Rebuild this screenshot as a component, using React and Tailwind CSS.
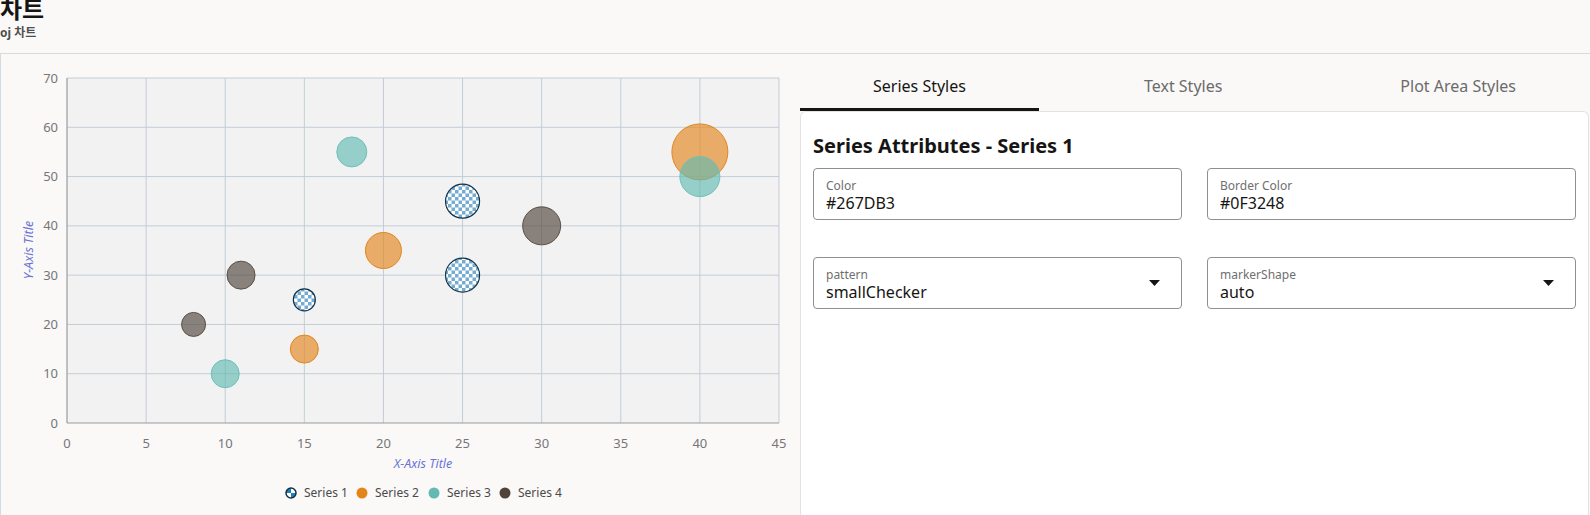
import React from "react";

const X0 = 67;
const X1 = 779;
const Y0 = 422;
const Y1 = 77;

const sx = (v) => X0 + (v * (X1 - X0)) / 45;
const sy = (v) => Y0 - (v * (Y0 - Y1)) / 70;

const series = [
  { name: "Series 1", color: "#267DB3", border: "#0F3248", pattern: true },
  { name: "Series 2", color: "#e3851a", border: "#e0861c" },
  { name: "Series 3", color: "#62bab3", border: "#6cc0b9" },
  { name: "Series 4", color: "#4f433a", border: "#5a4e46" },
];

// x, y, radius (px) per bubble
const bubbles = [
  { s: 0, x: 15, y: 25, r: 11 },
  { s: 0, x: 25, y: 45, r: 17 },
  { s: 0, x: 25, y: 30, r: 17 },
  { s: 1, x: 15, y: 15, r: 14 },
  { s: 1, x: 20, y: 35, r: 18 },
  { s: 1, x: 40, y: 55, r: 28 },
  { s: 2, x: 10, y: 10, r: 14 },
  { s: 2, x: 18, y: 55, r: 15 },
  { s: 2, x: 40, y: 50, r: 20 },
  { s: 3, x: 8, y: 20, r: 12 },
  { s: 3, x: 11, y: 30, r: 14 },
  { s: 3, x: 30, y: 40, r: 19 },
];

const legendX = [291, 362, 434, 505];

function BubbleChart() {
  const xTicks = [0, 5, 10, 15, 20, 25, 30, 35, 40, 45];
  const yTicks = [0, 10, 20, 30, 40, 50, 60, 70];
  const sorted = [...bubbles].sort((a, b) => b.r - a.r);

  return (
    <svg width="799" height="461" className="block">
      <defs>
        <pattern id="checker" width="7" height="7" patternUnits="userSpaceOnUse">
          <rect width="7" height="7" fill="#ffffff" />
          <rect width="3.5" height="3.5" fill="#74abd0" />
          <rect x="3.5" y="3.5" width="3.5" height="3.5" fill="#74abd0" />
        </pattern>
        <pattern id="checkerBig" x="286" y="487" width="10" height="10" patternUnits="userSpaceOnUse">
          <rect width="10" height="10" fill="#ffffff" />
          <rect width="5" height="5" fill="#267DB3" />
          <rect x="5" y="5" width="5" height="5" fill="#267DB3" />
        </pattern>
      </defs>
      <g transform="translate(-1,-53)" fontFamily="'Noto Sans', 'Open Sans', sans-serif">
        <rect x={X0} y={Y1} width={X1 - X0} height={Y0 - Y1} fill="#f2f2f2" />

        {/* grid */}
        {xTicks.slice(1).map((t) => (
          <line key={"gx" + t} x1={sx(t)} x2={sx(t)} y1={Y1} y2={Y0} stroke="#c3cdd7" strokeWidth="1" />
        ))}
        {yTicks.slice(1).map((t) => (
          <line key={"gy" + t} x1={X0} x2={X1} y1={sy(t)} y2={sy(t)} stroke="#c3cdd7" strokeWidth="1" />
        ))}
        <line x1={X0} x2={X0} y1={Y1} y2={Y0} stroke="#9b9b9b" strokeWidth="1.2" />
        <line x1={X0} x2={X1} y1={Y0} y2={Y0} stroke="#9b9b9b" strokeWidth="1.2" />

        {/* tick labels */}
        {yTicks.map((t) => (
          <text key={"ly" + t} x="58" y={sy(t)} dy="0.35em" textAnchor="end" fontSize="13" fill="#767676">
            {t}
          </text>
        ))}
        {xTicks.map((t) => (
          <text key={"lx" + t} x={sx(t)} y="442" dy="0.35em" textAnchor="middle" fontSize="13" fill="#767676">
            {t}
          </text>
        ))}

        {/* axis titles */}
        <text x="423" y="463" dy="0.35em" textAnchor="middle" fontSize="12.5" fontStyle="italic" fill="#6b74d6">
          X-Axis Title
        </text>
        <text
          x="29"
          y="249"
          dy="0.35em"
          textAnchor="middle"
          fontSize="12.5"
          fontStyle="italic"
          fill="#6b74d6"
          transform="rotate(-90 29 249)"
        >
          Y-Axis Title
        </text>

        {/* bubbles */}
        {sorted.map((b, i) => {
          const s = series[b.s];
          return s.pattern ? (
            <circle key={i} cx={sx(b.x)} cy={sy(b.y)} r={b.r} fill="url(#checker)" stroke={s.border} strokeWidth="1.2" />
          ) : (
            <circle
              key={i}
              cx={sx(b.x)}
              cy={sy(b.y)}
              r={b.r}
              fill={s.color}
              fillOpacity="0.64"
              stroke={s.border}
              strokeWidth="1"
            />
          );
        })}

        {/* legend */}
        {series.map((s, i) => (
          <g key={s.name}>
            {s.pattern ? (
              <circle cx={legendX[i]} cy="492" r="5" fill="url(#checkerBig)" stroke={s.border} strokeWidth="1.5" />
            ) : (
              <circle cx={legendX[i]} cy="492" r="5.5" fill={s.color} />
            )}
            <text x={legendX[i] + 13} y="492" dy="0.35em" fontSize="12" fill="#4a4a4a">
              {s.name}
            </text>
          </g>
        ))}
      </g>
    </svg>
  );
}

function Field({ label, value, select }) {
  return (
    <div className="relative h-[52px] rounded-[4px] border border-[#8f8f8f] bg-white px-3 pt-[10px]">
      <div className="text-[12px] leading-[14px] text-[#6f6f6f]">{label}</div>
      <div className="text-[16px] leading-[20px] text-[#161513]">{value}</div>
      {select && (
        <svg className="absolute right-[21px] top-[22px]" width="11" height="6" viewBox="0 0 11 6">
          <path d="M0 0 L11 0 L5.5 6 Z" fill="#161513" />
        </svg>
      )}
    </div>
  );
}

export default function App() {
  const tabs = ["Series Styles", "Text Styles", "Plot Area Styles"];

  return (
    <div className="h-[515px] w-[1590px] overflow-hidden bg-[#faf9f8] font-['Noto_Sans','Noto_Sans_CJK_KR',sans-serif]">
      {/* Header */}
      <div className="flex h-[54px] flex-col border-b border-[#d3dbe3]">
        <h1 className="mt-[-4px] text-[24px] font-bold leading-[24px] text-[#161513] font-['Noto_Sans_CJK_KR',sans-serif]">
          차트
        </h1>
        <div className="mt-[7px] text-[12px] font-bold leading-[12px] text-[#4f4f4f]">oj 차트</div>
      </div>

      <div className="flex h-[461px]">
        {/* Chart */}
        <div className="w-[800px] border-l border-[#d3dbe3]">
          <BubbleChart />
        </div>

        {/* Settings */}
        <div className="flex w-[790px] flex-col pr-[1px]">
          <div className="flex h-[57px] justify-between">
            {tabs.map((t, i) => (
              <div
                key={t}
                className={
                  i === 0
                    ? "flex items-center border-b-[3px] border-[#161513] px-[73px] pt-[10px] text-[16px] text-[#161513]"
                    : "flex items-center border-b-[3px] border-transparent px-[73px] pt-[10px] text-[16px] text-[#6b6b6b]"
                }
              >
                {t}
              </div>
            ))}
          </div>
          <div className="flex-1 rounded-t-[6px] border border-b-0 border-[#e3e3e3] bg-white px-3 pt-[21px]">
            <h2 className="text-[20px] font-bold leading-[26px] text-[#161513]">Series Attributes - Series 1</h2>
            <div className="mt-[9px] grid grid-cols-2 gap-x-[25px] gap-y-[37px]">
              <Field label="Color" value="#267DB3" />
              <Field label="Border Color" value="#0F3248" />
              <Field label="pattern" value="smallChecker" select />
              <Field label="markerShape" value="auto" select />
            </div>
          </div>
        </div>
      </div>
    </div>
  );
}
